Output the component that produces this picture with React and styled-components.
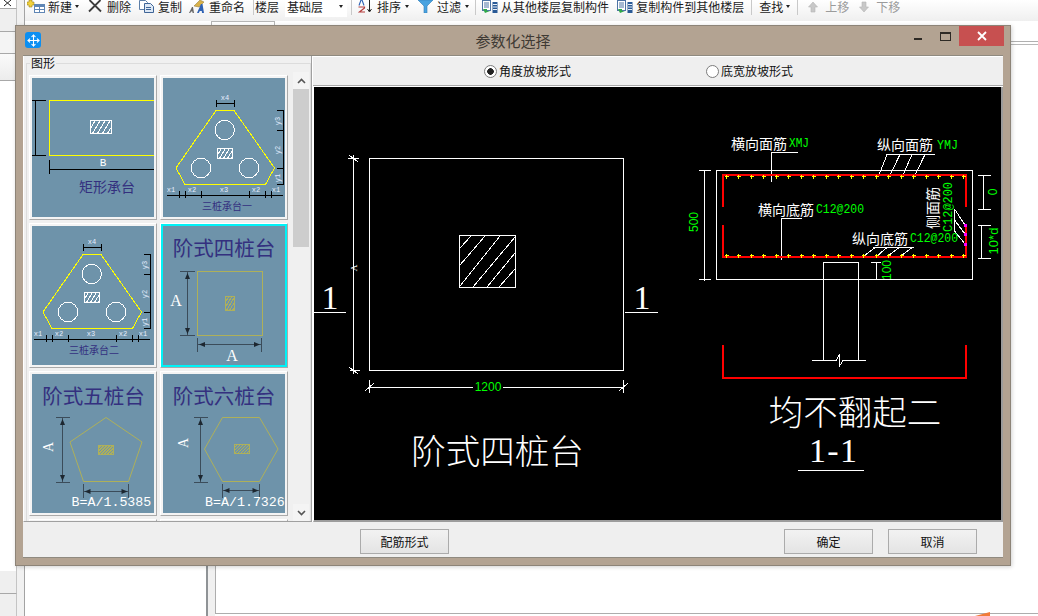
import React from 'react';
import styled, { createGlobalStyle } from 'styled-components';
import { Move } from 'lucide-react';

const cjk = '"Noto Sans CJK SC", "Liberation Sans", sans-serif';

const GlobalStyle = createGlobalStyle`
  html, body { margin: 0; padding: 0; background: #fff; }
  body { font-family: ${cjk}; font-size: 12px; color: #111; }
`;

const Page = styled.div`
  position: relative;
  width: 1038px;
  height: 616px;
  overflow: hidden;
  display: grid;
  grid-template-columns: 25px 1fr;
  background: #fff;
`;

/* stuff behind the dialog */
const Rail = styled.div`
  display: flex;
  flex-direction: column;
  background: #f1f1f1;
  border-right: 1px solid #a3a3a3;
`;
const RailCell = styled.div`
  width: 17px;
  height: ${p => p.$h}px;
  flex: ${p => (p.$grow ? 1 : 'none')};
  box-sizing: border-box;
  background: ${p => p.$bg || '#efefef'};
  border-bottom: ${p => (p.$line ? '1px solid #a8a8a8' : 'none')};
  border-right: 1px solid #c4c4c4;
  display: flex;
  justify-content: center;
  overflow: hidden;
`;
const Main = styled.div`
  display: flex;
  flex-direction: column;
  min-width: 0;
`;
const Toolbar = styled.div`
  height: 21px;
  flex: none;
  box-sizing: border-box;
  padding-left: 2px;
  display: flex;
  align-items: flex-start;
  background: linear-gradient(#ffffff, #efefef);
  white-space: nowrap;
`;
const ToolItem = styled.div`
  display: flex;
  align-items: center;
  height: 13px;
  margin-left: ${p => p.$ml || 0}px;
  gap: ${p => p.$gap ?? 3}px;
  line-height: 13px;
  color: ${p => (p.$off ? '#9b9b9b' : '#1c1c1c')};
`;
const Caret = styled.i`
  width: 0;
  height: 0;
  border-left: 2.5px solid transparent;
  border-right: 2.5px solid transparent;
  border-top: 3px solid #222;
`;
const Sep = styled.span`
  width: 1px;
  height: 15px;
  margin-left: ${p => p.$ml}px;
  background: #c9c9c9;
`;
const FloorSelect = styled.div`
  width: 62px;
  height: 17px;
  box-sizing: border-box;
  margin-left: 6px;
  padding: 0 4px 0 2px;
  background: #fff;
  display: flex;
  justify-content: space-between;
  line-height: 13px;
  span { color: #1c1c1c; }
  i { margin-top: 5px; }
`;
const TabStrip = styled.div`
  height: 4px;
  flex: none;
  padding-left: 186px;
  background: #fff;
`;
const Tab = styled.div`
  width: 64px;
  height: 4px;
  box-sizing: border-box;
  border: 1px solid #b5b5b5;
  border-bottom: none;
`;
const Workspace = styled.div`
  flex: 1;
  display: grid;
  grid-template-columns: 181px 9px 1fr;
  min-height: 0;
`;
const Divider = styled.div`
  background: #f0f0f0;
  border-left: 2px solid #8f9396;
`;
const EditorPane = styled.div`
  position: relative;
  margin-top: 16px;
  margin-bottom: 2px;
  border-left: 1px solid #adadad;
  border-top: 1px solid #b0b0b0;
  border-bottom: 1px solid #adadad;
  &::before {
    content: '';
    display: block;
    margin-top: 2px;
    border-top: 1px solid #b8b8b8;
  }
`;
const Blip = styled.svg`
  position: absolute;
  left: 759px;
  bottom: -3px;
`;

/* dialog */
const Dialog = styled.div`
  position: absolute;
  left: 15px;
  top: 25px;
  width: 996px;
  height: 541px;
  box-sizing: border-box;
  padding: 0 7px 7px 7px;
  background: #b3a392;
  border: 1px solid #8d8478;
  box-shadow: 1px 1px 4px rgba(0, 0, 0, 0.18);
  display: flex;
  flex-direction: column;
`;
const TitleBar = styled.div`
  position: relative;
  height: 29px;
  flex: none;
  display: flex;
  align-items: center;
  justify-content: center;
  font-size: 15px;
  color: #3f3a34;
`;
const AppBadge = styled.div`
  position: absolute;
  left: 2px;
  top: 6px;
  width: 16px;
  height: 16px;
  border-radius: 3px;
  background: #0b8ff2;
  display: flex;
  align-items: center;
  justify-content: center;
  color: #fff;
`;
const WinButtons = styled.div`
  position: absolute;
  right: -1px;
  top: 0;
  display: flex;
  align-items: flex-start;
`;
const MinGlyph = styled.span`
  width: 8px;
  height: 2px;
  margin-top: 12px;
  background: #2e2a25;
`;
const MaxGlyph = styled.span`
  width: 9px;
  height: 6px;
  margin: 6px 0 0 18px;
  border: 1px solid #2e2a25;
  border-top-width: 2px;
`;
const CloseBtn = styled.div`
  width: 45px;
  height: 20px;
  margin-left: 8px;
  background: #c75050;
  display: flex;
  align-items: center;
  justify-content: center;
`;
const Client = styled.div`
  flex: 1;
  display: flex;
  flex-direction: column;
  background: #efefef;
  border-top: 1px solid #8f8a80;
  border-bottom: 1px solid #8f8a80;
  min-height: 0;
`;
const Body = styled.div`
  height: 466px;
  flex: none;
  display: grid;
  grid-template-columns: 289px 690px;
  column-gap: 1px;
  background: #fff;
`;
const LeftPanel = styled.div`
  position: relative;
  box-sizing: border-box;
  padding: 7px 0 0 2px;
  overflow: hidden;
  background: #f0f0f0;
  border-right: 1px solid #a0a0a0;
  border-bottom: 1px solid #a0a0a0;
  border-left: 1px solid #fff;
`;
const Legend = styled.div`
  position: absolute;
  left: 6px;
  top: 0;
  padding: 0 1px;
  line-height: 14px;
  background: #f0f0f0;
  color: #111;
`;
const GroupBox = styled.div`
  height: 470px;
  box-sizing: border-box;
  padding: 11px 0 0 2px;
  border: 1px solid #dcdcdc;
  border-bottom: none;
  display: flex;
  align-items: flex-start;
`;
const Thumbs = styled.div`
  display: grid;
  grid-template-columns: repeat(2, 128px);
  grid-auto-rows: 145px;
  gap: 3px;
  height: 446px;
  overflow: hidden;
`;
const Thumb = styled.div`
  box-sizing: border-box;
  padding: 2px;
  border: 1px solid;
  border-color: #fff #a9a9a9 #a9a9a9 #fff;
  background: #f4f4f4;
`;
const ThumbArt = styled.svg`
  display: block;
  width: 122px;
  height: 139px;
  background: #6e93aa;
  outline: ${p => (p.$selected ? '2px solid #00f2f7' : 'none')};
`;
const Scrollbar = styled.div`
  width: 16px;
  height: 449px;
  margin: -3px 0 0 5px;
  display: flex;
  flex-direction: column;
  align-items: stretch;
  background: #f0f0f0;
`;
const ScrollArrow = styled.div`
  height: 17px;
  flex: none;
  display: flex;
  align-items: center;
  justify-content: center;
  background: #f4f4f4;
`;
const ScrollThumb = styled.div`
  height: 158px;
  flex: none;
  background: #cdcdcd;
`;
const ScrollTrack = styled.div`
  flex: 1;
`;
const RightPanel = styled.div`
  display: flex;
  flex-direction: column;
`;
const RadioStrip = styled.div`
  height: 30px;
  flex: none;
  margin-bottom: 1px;
  box-sizing: border-box;
  padding: 0 0 0 171px;
  display: flex;
  align-items: center;
  gap: 135px;
  background: #efefef;
  border-top: 1px solid #fff;
  border-bottom: 1px solid #a9a9a9;
`;
const Radio = styled.div`
  display: flex;
  align-items: center;
  gap: 2px;
  line-height: 14px;
`;
const RadioDot = styled.span`
  width: 13px;
  height: 13px;
  box-sizing: border-box;
  border-radius: 50%;
  border: 1px solid #7c7c7c;
  background: ${p => (p.$on ? 'radial-gradient(circle, #222 0 3px, #fff 3.6px)' : '#fff')};
`;
const CadFrame = styled.div`
  width: 687px;
  height: 433px;
  border-left: 1px solid #fff;
  border-right: 2px solid #9c9c9c;
  border-bottom: 2px solid #9c9c9c;
`;
const CadSvg = styled.svg`
  display: block;
  background: #000;
`;
const Footer = styled.div`
  flex: 1;
  display: flex;
  align-items: flex-start;
  padding: 7px 26px 0 337px;
`;
const Button = styled.div`
  width: 89px;
  height: 25px;
  box-sizing: border-box;
  margin-left: ${p => p.$ml || 0};
  border: 1px solid #ababab;
  background: linear-gradient(#f2f2f2, #e4e4e4);
  display: flex;
  align-items: center;
  justify-content: center;
  color: #111;
`;

/* svg text */
const T = styled.text`
  font-family: ${p => p.$font || cjk};
  font-size: ${p => p.$s}px;
  font-weight: ${p => p.$w || 400};
  fill: ${p => p.$c || '#fff'};
  text-anchor: ${p => p.$a || 'middle'};
  dominant-baseline: central;
  shape-rendering: auto;
`;
const Ln = styled.g`
  stroke: ${p => p.$c || '#fff'};
  stroke-width: ${p => p.$sw || 1};
  fill: none;
  shape-rendering: ${p => (p.$soft ? 'auto' : 'crispEdges')};
`;

const mono = '"Liberation Mono", "DejaVu Sans Mono", monospace';
const sans = '"Liberation Sans", sans-serif';
const serif = '"Liberation Serif", "Noto Sans CJK SC", serif';
const titleInk = '#34307f';

const segs = list => list.map(([x1, y1, x2, y2], i) => <line key={i} x1={x1} y1={y1} x2={x2} y2={y2} />);

function Hatch({ x, y, w, h, gap = 5, color = '#fff', lean = 0.6 }) {
  const lines = [];
  for (let i = -h; i < w + h; i += gap) lines.push([i, h, i + h * lean, 0]);
  return (
    <Ln $c={color}>
      <svg x={x} y={y} width={w} height={h}>{segs(lines)}</svg>
      <rect x={x} y={y} width={w} height={h} />
    </Ln>
  );
}

function RectangleCap() {
  return (
    <ThumbArt viewBox="32 78 122 139">
      <Ln $c="#ffff00"><path d="M154 100.5H49.5V155.5H154" /></Ln>
      <Ln $c="#000">{segs([[35.5, 100, 35.5, 156], [32, 100.5, 46, 100.5], [32, 155.5, 46, 155.5], [49.5, 160, 49.5, 174], [49.5, 169.5, 154, 169.5]])}</Ln>
      <Hatch x={90.5} y={120.5} w={21} h={13} />
      <T x={103} y={163} $s={11} $font={mono}>B</T>
      <T x={107} y={186} $s={14} $c={titleInk}>矩形承台</T>
    </ThumbArt>
  );
}

function ThreePile({ box, label }) {
  const ticksX = [179, 185, 201, 249, 265, 271];
  return (
    <ThumbArt viewBox={box}>
      <Ln $c="#ffff00"><path d="M216 110.5H234L274.5 168L265.5 184.5H185L176 168Z" /></Ln>
      <Ln $c="#fff">
        <circle cx={224.7} cy={130} r={9.7} />
        <circle cx={201} cy={168} r={9.7} />
        <circle cx={249} cy={168} r={9.7} />
      </Ln>
      <Hatch x={217.5} y={148.5} w={15} h={10} gap={4} />
      <Ln $c="#000">
        {segs([[216.5, 100, 216.5, 107], [234.5, 100, 234.5, 107], [216, 103.5, 235, 103.5], [283.5, 110, 283.5, 185], [277, 110.5, 284, 110.5], [277, 130.5, 284, 130.5], [277, 168.5, 284, 168.5], [277, 184.5, 284, 184.5], [167, 195.5, 283, 195.5]])}
        {segs(ticksX.map(x => [x + 0.5, 191, x + 0.5, 198]))}
      </Ln>
      <T x={225} y={98} $s={7} $font={mono} $c="#e6eeff">x4</T>
      {[[171, 'x1'], [192, 'x2'], [224, 'x3'], [256, 'x2'], [276, 'x1']].map(([x, t], i) => (
        <T key={i} x={x} y={190} $s={7} $font={mono} $c="#e6eeff">{t}</T>
      ))}
      {[[121, 'y3'], [150, 'y2'], [178, 'y1']].map(([y, t], i) => (
        <T key={i} x={278} y={y} $s={7} $font={mono} $c="#e6eeff" transform={`rotate(-90 278 ${y})`}>{t}</T>
      ))}
      <T x={227} y={205} $s={10} $c={titleInk}>{label}</T>
    </ThumbArt>
  );
}

const olive = '#aeb05a';
const dimInk = '#3b4c5a';

function ArrowV({ x, y1, y2 }) {
  return (
    <g fill="#1d2730" stroke="none">
      <path d={`M${x} ${y1 + 1}l-2.5 6h5z`} />
      <path d={`M${x} ${y2 - 1}l-2.5 -6h5z`} />
    </g>
  );
}
function ArrowH({ y, x1, x2 }) {
  return (
    <g fill="#1d2730" stroke="none">
      <path d={`M${x1 + 1} ${y}l6 -2.5v5z`} />
      <path d={`M${x2 - 1} ${y}l-6 -2.5v5z`} />
    </g>
  );
}

function FourPile() {
  return (
    <ThumbArt viewBox="163 226 122 139" $selected>
      <T x={224} y={247} $s={20.5} $c={titleInk}>阶式四桩台</T>
      <Ln $c={olive}><rect x={197.5} y={271.5} width={65} height={64} /></Ln>
      <Hatch x={225.5} y={296.5} w={9} h={14} gap={3} color={olive} />
      <Ln $c={dimInk}>{segs([[187.5, 272, 187.5, 335], [180, 271.5, 195, 271.5], [180, 335.5, 195, 335.5], [197.5, 338, 197.5, 352], [261.5, 338, 261.5, 352], [198, 344.5, 261, 344.5]])}</Ln>
      <ArrowV x={187.5} y1={272} y2={335} />
      <ArrowH y={344.5} x1={198} x2={261} />
      <T x={176} y={300} $s={16} $font={serif}>A</T>
      <T x={232} y={355} $s={16} $font={serif}>A</T>
    </ThumbArt>
  );
}

function PolyPile({ box, title, titleX, poly, rect, dimX, labelX, labelY, bx1, bx2, by, formula, fx }) {
  return (
    <ThumbArt viewBox={box}>
      <T x={titleX} y={395} $s={20.5} $c={titleInk}>{title}</T>
      <Ln $c={olive} $soft><path d={poly} /></Ln>
      <Hatch x={rect[0]} y={rect[1]} w={rect[2]} h={9} gap={3} color={olive} lean={1} />
      <Ln $c={dimInk}>{segs([[dimX, 418, dimX, 482], [dimX - 7, 417.5, dimX + 7, 417.5], [dimX - 7, 482.5, dimX + 7, 482.5], [bx1, 484, bx1, 498], [bx2, 484, bx2, 498], [bx1, by, bx2, by]])}</Ln>
      <ArrowV x={dimX} y1={418} y2={482} />
      <ArrowH y={by} x1={bx1} x2={bx2} />
      <T x={labelX} y={labelY} $s={14} $font={serif} transform={`rotate(-90 ${labelX} ${labelY})`}>A</T>
      <T x={fx} y={502} $s={13.3} $font={mono} $a="start">{formula}</T>
    </ThumbArt>
  );
}

const rebarX = [139, 175, 214, 250, 289, 325, 364, 400, 439, 475, 514, 550, 589, 625, 664, 700, 739, 775, 814, 850].map(v => 680 + v / 3);

function RebarDot({ x, y }) {
  return <path d={`M${x - 2} ${y}h4M${x} ${y - 2}v4`} stroke="#ffff00" fill="none" shapeRendering="crispEdges" />;
}

function CadDrawing() {
  const g = '#00ff00';
  return (
    <CadSvg width="687" height="433" viewBox="314 87 687 433">
      {/* plan view */}
      <Ln>
        <rect x={369.5} y={158.5} width={254} height={212} />
        <rect x={459.5} y={235.5} width={56} height={52} />
        {segs([[460, 248, 471, 236], [460, 265, 485, 236], [460, 286, 500, 236], [473, 287, 515, 237], [487, 287, 515, 253], [499, 287, 515, 269]])}
        {segs([[353.5, 155, 353.5, 374], [348, 158.5, 359, 158.5], [350, 370.5, 360, 370.5], [349, 155, 358, 162], [349, 367, 358, 374]])}
        {segs([[369.5, 380, 369.5, 393], [623.5, 380, 623.5, 393], [365, 391, 374, 383], [619, 391, 628, 383], [370, 387.5, 473, 387.5], [503, 387.5, 623, 387.5]])}
        {segs([[314, 312.5, 346, 312.5], [625, 312.5, 658, 312.5]])}
      </Ln>
      <T x={354} y={268} $s={9} $font={serif} transform="rotate(-90 354 268)">A</T>
      <T x={330} y={297} $s={34} $font={serif}>1</T>
      <T x={642} y={297} $s={34} $font={serif}>1</T>
      <T x={488} y={387} $s={12} $c={g} $font={sans}>1200</T>
      <T x={497.5} y={449} $s={34.5} $w={300}>阶式四桩台</T>

      {/* section view */}
      <Ln>
        <rect x={716.5} y={170.5} width={256} height={109} />
        {segs([[704.5, 170, 704.5, 281], [699, 170.5, 711, 170.5], [699, 279.5, 711, 279.5]])}
        {segs([[983.5, 175, 983.5, 209], [978, 175.5, 991, 175.5], [978, 209.5, 991, 209.5]])}
        {segs([[981.5, 225, 981.5, 258], [978, 225.5, 991, 225.5], [978, 258.5, 991, 258.5]])}
        {segs([[876.5, 262, 876.5, 279], [871, 262.5, 881, 262.5]])}
        {segs([[823.5, 262, 823.5, 360], [858.5, 262, 858.5, 360], [823.5, 262.5, 858.5, 262.5]])}
        <path d="M812 360.5H836L840 354L839 367L843 360.5H866" />
        <path d="M798 152.5H771.5V182" />
        {segs([[887, 154.5, 935, 154.5], [887, 154.5, 879, 175], [900, 154.5, 890, 175], [912, 154.5, 903, 175], [925, 154.5, 915, 175]])}
        <path d="M802 218.5H781.5V260" />
        {segs([[873, 247.5, 914, 247.5], [875, 247.5, 864, 256], [887, 247.5, 877, 256], [899, 247.5, 888, 256], [912, 247.5, 901, 256]])}
        {segs([[954.5, 209, 954.5, 231], [954.5, 209, 965, 225], [954.5, 220, 965, 234], [954.5, 231, 965, 244]])}
        {segs([[798, 470.5, 864, 470.5]])}
      </Ln>
      <Ln $c="#ff0000" $sw={2}>
        <path d="M723 207V175H966V207" />
        <path d="M723 225V257H966V225" />
        <path d="M723 345V378H966V345" />
      </Ln>
      {rebarX.map(x => (
        <g key={x}>
          <RebarDot x={Math.round(x) + 0.5} y={176.5} />
          <RebarDot x={Math.round(x) + 0.5} y={255.5} />
        </g>
      ))}
      {[225, 234, 244].map(y => <rect key={y} x={964} y={y - 1} width={3} height={3} fill="#ff00ff" />)}

      <T x={731} y={143} $s={14} $a="start">横向面筋</T>
      <T x={789} y={143} $s={13} $c={g} $a="start" $font={mono} textLength={20} lengthAdjust="spacingAndGlyphs">XMJ</T>
      <T x={877} y={144} $s={14} $a="start">纵向面筋</T>
      <T x={937} y={145} $s={13} $c={g} $a="start" $font={mono} textLength={21} lengthAdjust="spacingAndGlyphs">YMJ</T>
      <T x={758} y={209} $s={14} $a="start">横向底筋</T>
      <T x={816} y={209} $s={13} $c={g} $a="start" $font={mono} textLength={48} lengthAdjust="spacingAndGlyphs">C12@200</T>
      <T x={852} y={238} $s={14} $a="start">纵向底筋</T>
      <T x={910} y={238} $s={13} $c={g} $a="start" $font={mono} textLength={48} lengthAdjust="spacingAndGlyphs">C12@200</T>
      <T x={932} y={208} $s={14} transform="rotate(-90 932 208)">侧面筋</T>
      <T x={948} y={207} $s={13} $c={g} $font={mono} textLength={50} lengthAdjust="spacingAndGlyphs" transform="rotate(-90 948 207)">C12@200</T>
      <T x={694} y={222} $s={12} $c={g} $font={sans} transform="rotate(-90 694 222)">500</T>
      <T x={993} y={192} $s={12} $c={g} $font={sans} transform="rotate(-90 993 192)">0</T>
      <T x={993} y={241} $s={13} $c={g} $font={sans} transform="rotate(-90 993 241)">10*d</T>
      <T x={887} y={270} $s={12} $c={g} $font={sans} transform="rotate(-90 887 270)">100</T>
      <T x={855} y={410} $s={34.5} $w={300}>均不翻起二</T>
      <T x={833} y={450} $s={34} $font={serif} textLength={48} lengthAdjust="spacing">1-1</T>
    </CadSvg>
  );
}

/* toolbar icons */
const NewIcon = () => (
  <svg width="18" height="13" viewBox="0 0 18 13">
    <path d="M2 0h3v2h2v3H5v2H2V5H0V2h2z" fill="#f2d23c" stroke="#9a8420" strokeWidth="0.6" />
    <rect x="7.5" y="4.5" width="10" height="8" fill="#fff" stroke="#5f86b5" />
    <path d="M8 5h9v2H8z" fill="#5f86b5" />
    <path d="M8 9.5h9M12.5 7v5" stroke="#5f86b5" />
  </svg>
);
const DeleteIcon = () => (
  <svg width="14" height="13" viewBox="0 0 14 13">
    <path d="M1.5 0L13 11.5M12.5 0L1 11.5" stroke="#3d3d3d" strokeWidth="1.8" />
  </svg>
);
const CopyIcon = () => (
  <svg width="16" height="13" viewBox="0 0 16 13">
    <path d="M1.5 .5h6l2 2v7h-8z" fill="#fff" stroke="#5d7fa8" />
    <path d="M6.5 3.5h6l3 3v6h-9z" fill="#dde8f5" stroke="#3f6597" />
    <path d="M8 7.5h5M8 9.5h5" stroke="#3f6597" />
  </svg>
);
const RenameIcon = () => (
  <svg width="17" height="13" viewBox="0 0 17 13">
    <path d="M5 6L11 0l4 2-5 5z" fill="#d9b24a" stroke="#8b7130" strokeWidth="0.5" />
    <path d="M0 13l3-6h1l1 6H3.600l-.2-1.500H2l-.7 1.500z" fill="#666" />
    <path d="M8 13l4-9h1.500l1.500 9h-2l-.2-2h-2l-1 2z" fill="#2f62b4" />
  </svg>
);
const SortIcon = () => (
  <svg width="16" height="13" viewBox="0 0 16 13">
    <path d="M2 5.500L4 0h1l2 5.500" stroke="#2f62b4" fill="none" strokeWidth="1.1" />
    <path d="M1.500 7h6v1L2.500 12h5.500" stroke="#b33a3a" fill="none" strokeWidth="1.2" />
    <path d="M12.500 0v11M10.500 9l2 3 2-3" stroke="#222" fill="none" />
  </svg>
);
const FunnelIcon = () => (
  <svg width="15" height="13" viewBox="0 0 15 13">
    <path d="M0 0h15L9 6v7H6V6z" fill="#49a3e0" stroke="#2f7db8" strokeWidth="0.6" />
  </svg>
);
const CopyFloorIcon = () => (
  <svg width="16" height="13" viewBox="0 0 16 13">
    <rect x=".5" y=".5" width="8" height="10" fill="#fff" stroke="#4e74a5" />
    <path d="M2 3h5M2 5h5M2 7h5" stroke="#4e74a5" />
    <path d="M1 9h4v2h3l-5 2z" fill="#2fa84a" />
    <path d="M10.500 2h5v11h-5z" fill="#2a5a96" />
    <path d="M11 4.500h4M11 7h4M11 9.500h4" stroke="#e9f0f8" />
  </svg>
);
const MoveIcon = ({ down }) => (
  <svg width="10" height="12" viewBox="0 0 10 12" style={down ? { transform: 'scaleY(-1)' } : undefined}>
    <path d="M5 1L9.500 6H7v5H3V6H.5z" fill="#c8c8c8" stroke="#b5b5b5" strokeWidth="0.6" />
  </svg>
);

function ToolbarRow() {
  return (
    <Toolbar>
      <ToolItem><NewIcon />新建<Caret /></ToolItem>
      <ToolItem $ml={9} $gap={5}><DeleteIcon />删除</ToolItem>
      <ToolItem $ml={7} $gap={4}><CopyIcon />复制</ToolItem>
      <ToolItem $ml={7}><RenameIcon />重命名</ToolItem>
      <Sep $ml={8} />
      <ToolItem $ml={1}>楼层</ToolItem>
      <FloorSelect><span>基础层</span><Caret /></FloorSelect>
      <Sep $ml={4} />
      <ToolItem $ml={5} $gap={4}><SortIcon />排序<Caret /></ToolItem>
      <ToolItem $ml={9} $gap={4}><FunnelIcon />过滤<Caret /></ToolItem>
      <Sep $ml={6} />
      <ToolItem $ml={6}><CopyFloorIcon />从其他楼层复制构件</ToolItem>
      <ToolItem $ml={8}><CopyFloorIcon />复制构件到其他楼层</ToolItem>
      <Sep $ml={7} />
      <ToolItem $ml={7}>查找<Caret /></ToolItem>
      <Sep $ml={7} />
      <ToolItem $ml={10} $gap={7} $off><MoveIcon />上移</ToolItem>
      <ToolItem $ml={10} $gap={7} $off><MoveIcon down />下移</ToolItem>
    </Toolbar>
  );
}

export default function App() {
  return (
    <>
      <GlobalStyle />
      <Page>
        <Rail>
          <RailCell $h={9} $line $bg="#fff">
            <svg width="10" height="8" viewBox="0 0 10 8"><path d="M1 0l7 6M8 0L1 6" stroke="#222" fill="none" /></svg>
          </RailCell>
          <RailCell $h={23} $line />
          <RailCell $h={22} $line $bg="#f4f4f4" />
          <RailCell $h={27} $line $bg="linear-gradient(#fafafa, #ececec)" />
          <RailCell $grow $bg="#fff" />
          <RailCell $h={23} $line />
          <RailCell $h={22} />
        </Rail>
        <Main>
          <ToolbarRow />
          <TabStrip><Tab /></TabStrip>
          <Workspace>
            <div />
            <Divider />
            <EditorPane>
              <Blip width="16" height="4" viewBox="0 0 16 4"><path d="M0 4L15 0v4z" fill="#f07b3a" /></Blip>
            </EditorPane>
          </Workspace>
        </Main>

        <Dialog>
          <TitleBar>
            <AppBadge><Move size={13} strokeWidth={2} /></AppBadge>
            参数化选择
            <WinButtons>
              <MinGlyph />
              <MaxGlyph />
              <CloseBtn>
                <svg width="10" height="10" viewBox="0 0 10 10"><path d="M1 1l8 8M9 1l-8 8" stroke="#fff" strokeWidth="1.8" /></svg>
              </CloseBtn>
            </WinButtons>
          </TitleBar>
          <Client>
            <Body>
              <LeftPanel>
                <Legend>图形</Legend>
                <GroupBox>
                  <Thumbs>
                    <Thumb><RectangleCap /></Thumb>
                    <Thumb><ThreePile box="163 78 122 139" label="三桩承台一" /></Thumb>
                    <Thumb><ThreePile box="165 82 122 139" label="三桩承台二" /></Thumb>
                    <Thumb><FourPile /></Thumb>
                    <Thumb>
                      <PolyPile
                        box="32 374 122 139"
                        title="阶式五桩台"
                        titleX={93.5}
                        poly="M106 417.5L142 442L128.5 481.5H83.5L70 442Z"
                        rect={[98.5, 445, 15]}
                        dimX={62.5}
                        labelX={48}
                        labelY={447}
                        bx1={83.5}
                        bx2={128.5}
                        by={491.5}
                        formula="B=A/1.5385"
                        fx={71.5}
                      />
                    </Thumb>
                    <Thumb>
                      <PolyPile
                        box="163 374 122 139"
                        title="阶式六桩台"
                        titleX={224}
                        poly="M222.5 417.5H259.5L278 449L259.5 481.5H222.5L204.5 449Z"
                        rect={[234.5, 444.5, 15]}
                        dimX={200.5}
                        labelX={183}
                        labelY={443}
                        bx1={222.5}
                        bx2={259.5}
                        by={490.5}
                        formula="B=A/1.7326"
                        fx={205}
                      />
                    </Thumb>
                    <Thumb />
                    <Thumb />
                  </Thumbs>
                  <Scrollbar>
                    <ScrollArrow>
                      <svg width="9" height="6" viewBox="0 0 9 6"><path d="M1 5l3.5-3.5L8 5" stroke="#555" strokeWidth="1.6" fill="none" /></svg>
                    </ScrollArrow>
                    <ScrollThumb />
                    <ScrollTrack />
                    <ScrollArrow>
                      <svg width="9" height="6" viewBox="0 0 9 6"><path d="M1 1l3.5 3.5L8 1" stroke="#555" strokeWidth="1.6" fill="none" /></svg>
                    </ScrollArrow>
                  </Scrollbar>
                </GroupBox>
              </LeftPanel>
              <RightPanel>
                <RadioStrip>
                  <Radio><RadioDot $on />角度放坡形式</Radio>
                  <Radio><RadioDot />底宽放坡形式</Radio>
                </RadioStrip>
                <CadFrame><CadDrawing /></CadFrame>
              </RightPanel>
            </Body>
            <Footer>
              <Button>配筋形式</Button>
              <Button $ml="auto">确定</Button>
              <Button $ml="15px">取消</Button>
            </Footer>
          </Client>
        </Dialog>
      </Page>
    </>
  );
}
